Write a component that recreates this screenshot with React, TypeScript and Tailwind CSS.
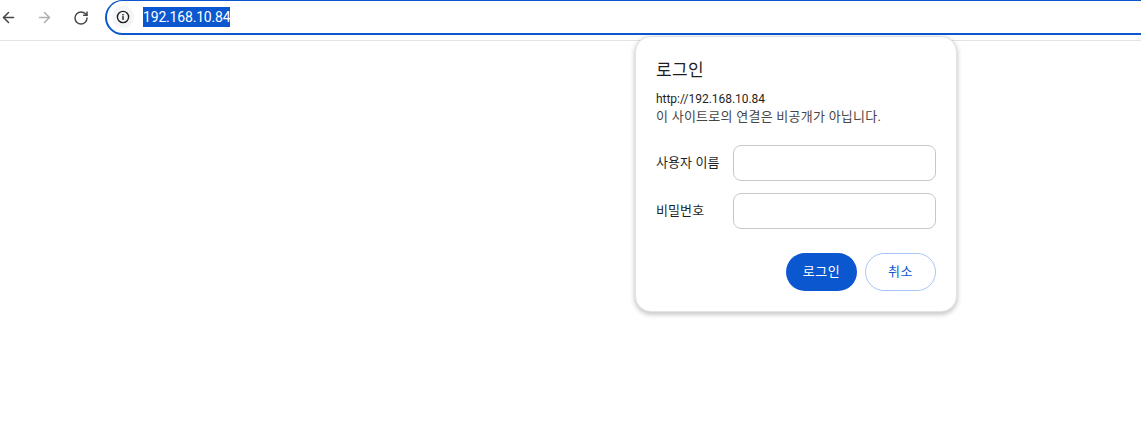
import { ArrowLeft, ArrowRight, RotateCw } from 'lucide-react';

const FONT = "font-['Roboto','Noto_Sans_CJK_KR',sans-serif]";

function Field({ label }: { label: string }) {
    return (
        <div className="flex items-center h-[36px]">
            <label className="w-[77px] text-[13px] text-[#1f1f1f] tracking-[0.1px]">{label}</label>
            <input
                type="text"
                className="w-[203px] h-[36px] rounded-[8px] border border-[#c7c7c7] bg-white outline-none"
            />
        </div>
    );
}

export default function App() {
    return (
        <div className={`relative w-[1141px] h-[421px] overflow-hidden bg-white ${FONT}`}>
            {/* Toolbar */}
            <div className="h-[41px] border-b border-[#e3e3e3] flex items-start">
                <div className="flex items-center h-[35px] w-[105px] shrink-0">
                    <ArrowLeft size={17} strokeWidth={2.2} className="text-[#474747]" />
                    <ArrowRight size={17} strokeWidth={2.2} className="ml-[19px] text-[#b0b0b0]" />
                    <RotateCw size={16} strokeWidth={2.2} className="ml-[20px] text-[#474747]" />
                </div>
                <div className="flex items-center h-[35px] w-[1060px] shrink-0 border-2 border-[#0b57d0] border-t-[1px] rounded-l-[18px] pl-[5px]">
                    <div className="flex items-center justify-center w-[22px] h-[22px] rounded-full bg-[#f3f5f7]">
                        <svg width="14" height="14" viewBox="0 0 14 14" fill="none">
                            <circle cx="7" cy="7" r="5.6" stroke="#1f1f1f" strokeWidth="1.4" />
                            <rect x="6.3" y="6.1" width="1.4" height="3.8" fill="#1f1f1f" />
                            <rect x="6.3" y="4" width="1.4" height="1.4" fill="#1f1f1f" />
                        </svg>
                    </div>
                    <span className="ml-[9px] h-[20px] leading-[20px] bg-[#0b57d0] text-white text-[14px] tracking-[-0.18px]">
                        192.168.10.84
                    </span>
                </div>
            </div>

            {/* Login dialog */}
            <div className="absolute left-[635px] top-[36px] w-[322px] h-[276px] rounded-[16px] bg-white border border-[#e3e3e3] shadow-[0_2px_4px_1px_rgba(0,0,0,0.2)] px-[20px]">
                <h2 className="mt-[23px] text-[17px] leading-[20px] text-[#1f1f1f] tracking-[0.3px]">로그인</h2>
                <p className="mt-[10px] text-[12px] leading-[18px] text-[#1f1f1f] tracking-[-0.03px]">http://192.168.10.84</p>
                <p className="text-[13px] leading-[18px] text-[#474747] tracking-[0.25px]">이 사이트로의 연결은 비공개가 아닙니다.</p>
                <div className="mt-[19px] flex flex-col gap-[12px]">
                    <Field label="사용자 이름" />
                    <Field label="비밀번호" />
                </div>
                <div className="mt-[24px] flex justify-end gap-[8px]">
                    <button className="w-[71px] h-[38px] rounded-full bg-[#0b57d0] text-white text-[13px] tracking-[0.5px]">로그인</button>
                    <button className="w-[71px] h-[38px] rounded-full bg-white border border-[#a8c7fa] text-[#0b57d0] text-[13px] tracking-[0.5px]">취소</button>
                </div>
            </div>
        </div>
    );
}
